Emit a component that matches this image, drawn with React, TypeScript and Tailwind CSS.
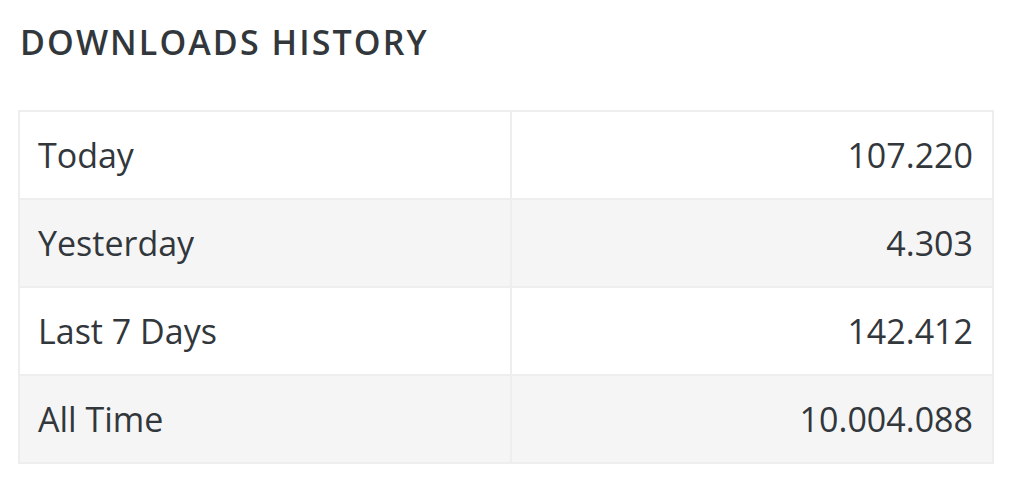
import React from "react";

const rows = [
  { label: "Today", value: "107.220" },
  { label: "Yesterday", value: "4.303" },
  { label: "Last 7 Days", value: "142.412" },
  { label: "All Time", value: "10.004.088" },
];

export default function App() {
  return (
    <div
      className="w-[1024px] h-[496px] bg-white text-[#32373c]"
      style={{ fontFamily: '"Open Sans", "Noto Sans", sans-serif' }}
    >
      <div className="pl-[18px] pt-[18px]">
        <h2 className="pl-[2px] text-[34px] leading-[48px] font-semibold tracking-[2.1px] uppercase">
          Downloads History
        </h2>
        <div className="mt-[44px] w-[976px] border-2 border-[#eeeeee]">
          {rows.map((r, i) => (
            <div
              key={r.label}
              className={`grid grid-cols-[492px_1fr] ${
                i < rows.length - 1 ? "h-[88px] border-b-2 border-[#eeeeee]" : "h-[86px]"
              } ${i % 2 === 1 ? "bg-[#f5f5f5]" : "bg-white"}`}
            >
              <div className="flex items-center pl-[18px] border-r-2 border-[#eeeeee] text-[34px]">
                {r.label}
              </div>
              <div className="flex items-center justify-end pr-[19px] text-[34px]">
                {r.value}
              </div>
            </div>
          ))}
        </div>
      </div>
    </div>
  );
}
